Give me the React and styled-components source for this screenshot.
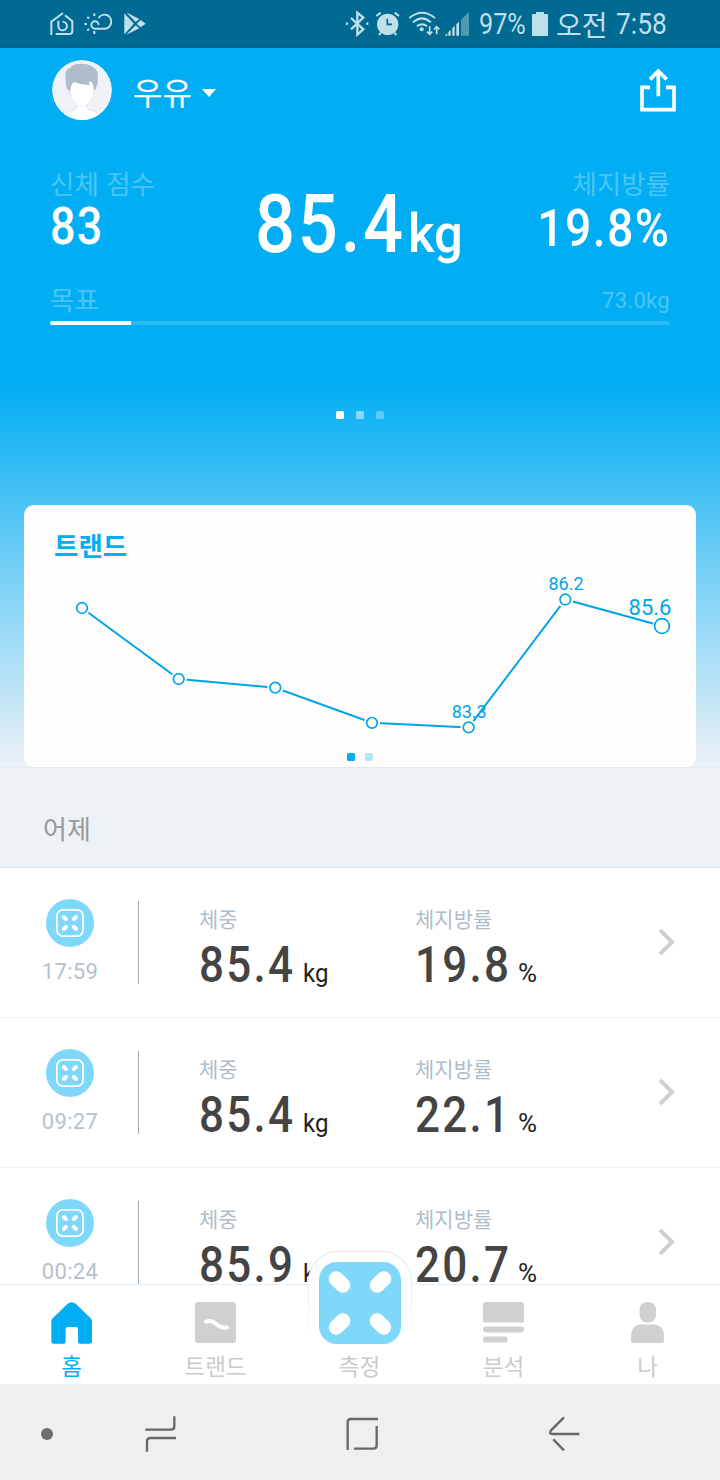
import React from 'react';
import styled, { createGlobalStyle } from 'styled-components';

const GlobalStyle = createGlobalStyle`
  * { box-sizing: border-box; }
  body { margin: 0; background: #fff; }
  svg { display: block; flex: none; }
`;

const BLUE = '#02aef3';
const LINE = '#00a4e8';
const SKY = '#7fd7f9';
const GREY = '#d0d0d0';
const ICON = '#bfdfea';

const Screen = styled.div`
  width: 720px;
  height: 1480px;
  display: flex;
  flex-direction: column;
  overflow: hidden;
  font-family: Roboto, 'Noto Sans CJK KR', sans-serif;
`;

/* ---------- shared text ---------- */

const Slot = styled.div`
  flex: none;
  width: ${(p) => p.$w}px;
  margin-left: ${(p) => p.$ml || 0}px;
  white-space: nowrap;
`;

const Narrow = styled.span`
  display: inline-block;
  white-space: nowrap;
  font-size: ${(p) => p.$size}px;
  line-height: ${(p) => p.$lh || p.$size}px;
  font-weight: ${(p) => p.$weight || 500};
  letter-spacing: ${(p) => p.$ls || 0}px;
  transform: scaleX(${(p) => p.$x || 1});
  transform-origin: ${(p) => p.$origin || 'left'} center;
`;

const Korean = styled.span`
  display: block;
  white-space: nowrap;
  font-family: 'Noto Sans CJK KR', sans-serif;
  font-size: ${(p) => p.$size}px;
  line-height: ${(p) => p.$lh}px;
  font-weight: ${(p) => p.$weight || 400};
  word-spacing: 1.5px;
  color: ${(p) => p.$color || 'inherit'};
`;

/* ---------- status bar ---------- */

const StatusBar = styled.header`
  flex: none;
  height: 48px;
  padding: 1px 0 0 49px;
  display: flex;
  align-items: center;
  background: #006a93;
  color: ${ICON};
  border-bottom: 1px solid #046088;
`;

const Spacer = styled.div`
  flex: none;
  width: ${(p) => p.$w}px;
`;

const Battery = styled.div`
  flex: none;
  width: 17px;
  height: 24px;
  margin-left: 5px;
  display: flex;
  flex-direction: column;
  align-items: center;
  &::before {
    content: '';
    width: 8px;
    height: 2px;
    background: ${ICON};
  }
  &::after {
    content: '';
    width: 16px;
    flex: 1;
    border-radius: 1px;
    background: ${ICON};
  }
`;

const StatusIcons = () => (
  <>
    <svg width="26" height="26" viewBox="147 36 78 78" fill="none" stroke={ICON} strokeWidth="6">
      <path d="M154 108V68L189 42" />
      <path d="M195 49L217 67V97Q217 105 209 105H167" />
      <path d="M175 65V83A13 13 0 1 0 188 68" />
    </svg>
    <Spacer $w={9} />
    <svg width="28" height="26" viewBox="252 36 84 78" fill="none" stroke={ICON} strokeWidth="6">
      <path d="M296 78A11 11 0 1 0 285 89H314A20 21 0 1 0 296 58" />
      <path d="M283 43V51M283 96V105M262 54L267 59M262 95L267 90M253 75H261" />
    </svg>
    <Spacer $w={12} />
    <svg width="22" height="26" viewBox="371 36 66 78" fill={ICON}>
      <path d="M372 43L401 74L372 106Z" />
      <path d="M377 40L417 60L406 69Z" />
      <path d="M421 63L436 74L421 85L409 74Z" />
      <path d="M377 108L406 79L417 88Z" />
    </svg>
    <Spacer $w={199} />
    <svg width="24" height="28" viewBox="46 33 72 84" fill="none" stroke={ICON} strokeWidth="7">
      <path d="M64 57L101 91L83 107V41L101 56L64 91" />
      <path d="M50 70L56 74L50 78ZM115 70L109 74L115 78Z" fill={ICON} strokeWidth="2" />
    </svg>
    <Spacer $w={6} />
    <svg width="26" height="28" viewBox="136 33 78 84">
      <circle cx="174" cy="76" r="32" fill={ICON} />
      <path d="M140 51L153 41M208 51L195 41M148 108L154 101M200 108L194 101" stroke={ICON} strokeWidth="6" />
      <path d="M173 59V76H187" fill="none" stroke="#006a93" strokeWidth="5" />
    </svg>
    <Spacer $w={7} />
    <svg width="34" height="28" viewBox="237 33 102 84" fill="none" stroke={ICON} strokeWidth="6">
      <path d="M241 57Q279 25 318 57M252 70Q279 46 306 70M264 82Q279 69 294 82" />
      <circle cx="278" cy="91" r="6" fill={ICON} stroke="none" />
      <path d="M302 82V105M294 98L302 106L310 98M323 106V84M315 91L323 83L331 91" strokeWidth="5" />
    </svg>
    <Spacer $w={2} />
    <svg width="25" height="28" viewBox="345 33 75 84" fill={ICON}>
      <path d="M396 63L420 38V110H396Z" fill="#4f99b5" />
      <path d="M347 110L355 102V110ZM358 99L365 92V110H358ZM370 87L377 80V110H370ZM382 76L390 68V110H382Z" />
    </svg>
  </>
);

/* ---------- hero ---------- */

const Hero = styled.section`
  flex: none;
  height: 720px;
  display: flex;
  flex-direction: column;
  color: #fff;
  background: linear-gradient(#02aef3 0, #02aef3 337px, #edf2f7 720px);
  border-bottom: 1px solid #e3eaf0;
`;

const ProfileBar = styled.div`
  height: 84px;
  padding: 0 44px 0 52px;
  display: flex;
  align-items: center;
`;

const UserName = styled.div`
  margin: 1px 10px 0 21px;
`;

const Caret = styled.div`
  margin-top: 5px;
  border: 7px solid transparent;
  border-top: 8px solid #fff;
  border-bottom: 0;
`;

const ShareButton = styled.div`
  margin-left: auto;
`;

const Metrics = styled.div`
  height: 148px;
  padding: 32px 50px 0;
  display: grid;
  grid-template-columns: 205px 1fr 140px;
`;

const Metric = styled.div`
  display: flex;
  flex-direction: column;
  align-items: ${(p) => (p.$right ? 'flex-end' : 'flex-start')};
`;

const MainMetric = styled.div`
  display: flex;
  align-items: baseline;
  height: 100px;
  padding-top: 20px;
`;

const faint = 'rgba(255,255,255,.3)';

const Goal = styled.div`
  padding: 0 50px;
  height: 52px;
`;

const GoalHead = styled.div`
  height: 41px;
  display: flex;
  justify-content: space-between;
  align-items: flex-start;
  color: ${faint};
`;

const GoalTarget = styled.div`
  padding-top: 2px;
`;

const Track = styled.div`
  height: 4px;
  border-radius: 2px;
  background: rgba(255,255,255,.16);
`;

const Fill = styled.div`
  width: ${(p) => p.$pct}%;
  height: 4px;
  border-radius: 2px 0 0 2px;
  background: #fff;
`;

const Dots = styled.div`
  display: flex;
  justify-content: center;
  gap: ${(p) => p.$gap}px;
  margin-top: ${(p) => p.$mt}px;
`;

const Dot = styled.i`
  width: 8px;
  height: 8px;
  border-radius: 1.5px;
  background: ${(p) => p.$c};
`;

/* ---------- trend card ---------- */

const Card = styled.div`
  margin: auto 24px 0;
  height: 262px;
  border-radius: 10px;
  background: #fffefd;
  padding-top: 22px;
`;

const CardTitle = styled.div`
  padding-left: 30px;
  height: 38px;
  color: ${BLUE};
`;

const points = [
  { x: 82, y: 608 },
  { x: 178.7, y: 679 },
  { x: 275.3, y: 687.7 },
  { x: 372, y: 722.8 },
  { x: 468.6, y: 727.4, label: '83.3', lx: 469.2, ly: 718, size: 18 },
  { x: 565.3, y: 599.5, label: '86.2', lx: 566, ly: 590, size: 18 },
  { x: 662, y: 626, r: 7.4, label: '85.6', lx: 650, ly: 614.6, size: 22 },
];

const TrendChart = () => (
  <svg width="672" height="188" viewBox="24 565 672 188" fontFamily="Roboto, sans-serif">
    <polyline
      points={points.map((p) => `${p.x},${p.y}`).join(' ')}
      fill="none"
      stroke={LINE}
      strokeWidth="2"
    />
    {points.map((p) => (
      <g key={p.x}>
        <circle cx={p.x} cy={p.y} r={p.r ? 9.5 : 8} fill="#fffefd" />
        <circle cx={p.x} cy={p.y} r={p.r || 5.3} fill="#fffefd" stroke={LINE} strokeWidth="1.7" />
      </g>
    ))}
    {points.filter((p) => p.label).map((p) => (
      <text key={p.label} x={p.lx} y={p.ly} fontSize={p.size} fill={LINE} textAnchor="middle">
        {p.label}
      </text>
    ))}
  </svg>
);

/* ---------- history ---------- */

const DayHeader = styled.div`
  flex: none;
  height: 100px;
  padding: 41px 0 0 43px;
  background: #edf2f7;
  border-bottom: 1px solid #dfe8f0;
`;

const List = styled.div`
  flex: none;
  height: 416px;
  overflow: hidden;
`;

const Row = styled.div`
  height: 150px;
  display: flex;
  border-bottom: 1px solid #edf2f6;
`;

const Source = styled.div`
  width: 138px;
  padding: 31px 0 0 2px;
  display: flex;
  flex-direction: column;
  align-items: center;
  gap: 12px;
  color: #b6c1cb;
`;

const Rule = styled.div`
  width: 1px;
  height: 83px;
  margin-top: 33px;
  background: #9cacb8;
`;

const Reading = styled.div`
  width: ${(p) => p.$w}px;
  padding: 35px 0 0 ${(p) => p.$pl || 0}px;
  color: #444;
`;

const Value = styled.div`
  display: flex;
  align-items: baseline;
  height: 60px;
  margin-top: 2px;
`;

const Unit = styled.span`
  display: inline-block;
  font-size: 25px;
  line-height: 30px;
  font-weight: 400;
  color: #222;
  transform: scaleX(${(p) => p.$x});
  transform-origin: left center;
`;

const Arrow = styled.div`
  margin: 60px 0 0 27px;
`;

const ScaleIcon = () => (
  <svg width="48" height="48" viewBox="0 0 48 48">
    <circle cx="24" cy="24" r="24" fill={SKY} />
    <rect x="10.9" y="10.9" width="26.2" height="26.2" rx="6" fill="none" stroke="#fff" strokeWidth="1.8" />
    <path
      d="M17.8 18L20 20.2M30 18L27.8 20.2M17.8 30L20 27.8M30 30L27.8 27.8"
      stroke="#fff"
      strokeWidth="4"
      strokeLinecap="round"
    />
  </svg>
);

const records = [
  { time: '17:59', weight: '85.4', fat: '19.8' },
  { time: '09:27', weight: '85.4', fat: '22.1' },
  { time: '00:24', weight: '85.9', fat: '20.7' },
];

const Record = ({ time, weight, fat }) => (
  <Row>
    <Source>
      <ScaleIcon />
      <Narrow $size={22} $lh={26} $weight={400} $ls={0.3}>{time}</Narrow>
    </Source>
    <Rule />
    <Reading $w={276} $pl={60}>
      <Korean $size={21} $lh={30} $color="#afbdc8">체중</Korean>
      <Value>
        <Slot $w={104}><Narrow $size={50} $lh={60} $x={0.88} $ls={2.6}>{weight}</Narrow></Slot>
        <Unit $x={0.96}>kg</Unit>
      </Value>
    </Reading>
    <Reading $w={216}>
      <Korean $size={21} $lh={30} $color="#afbdc8">체지방률</Korean>
      <Value>
        <Slot $w={103}><Narrow $size={50} $lh={60} $x={0.88} $ls={2.6}>{fat}</Narrow></Slot>
        <Unit $x={1.04}>%</Unit>
      </Value>
    </Reading>
    <Arrow>
      <svg width="18" height="28" viewBox="0 0 18 28" fill="none" stroke={GREY} strokeWidth="4">
        <path d="M2 2L14 14L2 26" />
      </svg>
    </Arrow>
  </Row>
);

/* ---------- tab bar ---------- */

const TabBar = styled.nav`
  flex: none;
  position: relative;
  height: 100px;
  display: grid;
  grid-template-columns: repeat(5, 144px);
  background: #fff;
  border-top: 1px solid #e2edf7;
`;

const Tab = styled.div`
  padding: 16px 1px 0 0;
  display: flex;
  flex-direction: column;
  align-items: center;
  gap: 5.5px;
  color: ${(p) => (p.$active ? BLUE : '#cbcbcb')};
`;

const MeasureButton = styled.div`
  position: absolute;
  left: 308px;
  top: -34px;
  width: 104px;
  height: 94px;
  padding: 10px;
  border-radius: 30px 30px 0 0;
  background: linear-gradient(#dfeaf5 0, #e6eef7 50%, #fff 90%);
  &::before {
    content: '';
    position: absolute;
    inset: 1px 1px 0;
    border-radius: 29px 29px 0 0;
    background: #fff;
  }
  svg { position: relative; }
`;

const IconBox = styled.div`
  height: 43px;
  display: flex;
  align-items: center;
`;

/* ---------- system navigation ---------- */

const SystemNav = styled.footer`
  flex: none;
  height: 96px;
  display: flex;
  align-items: center;
  padding: 3px 0 0 41px;
  background: #efefef;
`;

const NavDot = styled.div`
  width: 12px;
  height: 12px;
  border-radius: 50%;
  background: #6e6e6e;
`;

export default function App() {
  return (
    <Screen>
      <GlobalStyle />
      <StatusBar>
        <StatusIcons />
        <Slot $w={47} $ml={10}><Narrow $size={30} $lh={34} $weight={400} $x={0.84}>97%</Narrow></Slot>
        <Battery />
        <Slot $w={53} $ml={8}><Korean $size={28} $lh={38}>오전</Korean></Slot>
        <Slot $w={54} $ml={7}><Narrow $size={30} $lh={34} $weight={400} $x={0.88}>7:58</Narrow></Slot>
      </StatusBar>

      <Hero>
        <ProfileBar>
          <svg width="60" height="60" viewBox="156 180 180 180">
            <clipPath id="face"><circle cx="246" cy="270" r="90" /></clipPath>
            <g clipPath="url(#face)">
              <circle cx="246" cy="270" r="90" fill="#eff3f8" />
              <path d="M192 360V344Q204 332 223 330Q233 326 231 314H260Q258 326 269 330Q288 332 300 344V360Z" fill="#fff" />
              <path d="M198 340Q210 331 223 330Q233 326 231 314M261 314Q258 326 269 330Q284 331 295 340" fill="none" stroke="#bcc5d0" strokeWidth="1.5" />
              <path d="M200 254Q193 260 202 274Q205 280 210 279M291 254Q299 260 290 274Q287 280 282 279" fill="#fff" stroke="#bcc5d0" strokeWidth="1.5" />
              <path d="M210 240H282V272Q279 300 258 316Q246 324 234 316Q213 300 210 272Z" fill="#fff" stroke="#c5cdd6" strokeWidth="1" />
              <path d="M201 266Q194 238 197 219Q198 207 210 204Q218 191 242 191Q268 190 279 202Q294 208 294 228Q295 248 288 267L282 272Q281 256 276 248Q273 243 266 246L270 255Q244 256 222 246Q212 254 210 276Z" fill="#b0bccb" />
            </g>
          </svg>
          <UserName><Korean $size={32} $lh={46}>우유</Korean></UserName>
          <Caret />
          <ShareButton>
            <svg width="36" height="44" viewBox="930 203 108 132" fill="none" stroke="#fff" strokeWidth="11">
              <path d="M960 261H936V328H1032V261H1008" />
              <path d="M985 288V212M960 237L985 212L1010 237" />
            </svg>
          </ShareButton>
        </ProfileBar>

        <Metrics>
          <Metric>
            <Korean $size={26.5} $lh={38} $color={faint}>신체 점수</Korean>
            <Narrow $size={51} $lh={50} $x={0.88} $ls={1.5}>83</Narrow>
          </Metric>
          <MainMetric>
            <Slot $w={153}><Narrow $size={81} $lh={82} $x={0.87} $ls={3.2}>85.4</Narrow></Slot>
            <Narrow $size={54} $lh={60} $x={0.94}>kg</Narrow>
          </MainMetric>
          <Metric $right>
            <Korean $size={26.5} $lh={38} $color={faint}>체지방률</Korean>
            <Narrow $size={51} $lh={54} $x={0.91} $ls={1.5} $origin="right">19.8%</Narrow>
          </Metric>
        </Metrics>

        <Goal>
          <GoalHead>
            <Korean $size={26.5} $lh={38}>목표</Korean>
            <GoalTarget><Narrow $size={22} $lh={38} $weight={400} $ls={0.3}>73.0kg</Narrow></GoalTarget>
          </GoalHead>
          <Track><Fill $pct={13.1} /></Track>
        </Goal>

        <Dots $gap={12} $mt={79}>
          <Dot $c="#fff" />
          <Dot $c="rgba(255,255,255,.5)" />
          <Dot $c="rgba(255,255,255,.3)" />
        </Dots>

        <Card>
          <CardTitle><Korean $size={26.5} $lh={36} $weight={700}>트랜드</Korean></CardTitle>
          <TrendChart />
          <Dots $gap={10} $mt={0}>
            <Dot $c={BLUE} />
            <Dot $c="#b1e5fa" />
          </Dots>
        </Card>
      </Hero>

      <DayHeader><Korean $size={26} $lh={38} $color="#999">어제</Korean></DayHeader>
      <List>{records.map((r) => <Record key={r.time} {...r} />)}</List>

      <TabBar>
        <Tab $active>
          <IconBox>
            <svg width="41" height="42" viewBox="153 363 123 126" fill={BLUE}>
              <path d="M154 421Q154 416 158 412L203 368Q215 359 227 368L272 412Q276 416 276 421V482Q276 488 270 488H240Q234 488 234 482V444Q234 438 228 438H203Q197 438 197 444V482Q197 488 191 488H160Q154 488 154 482Z" />
            </svg>
          </IconBox>
          <Korean $size={22.5} $lh={30}>홈</Korean>
        </Tab>
        <Tab>
          <IconBox>
            <svg width="41" height="41" viewBox="0 0 41 41">
              <rect width="41" height="41" rx="3" fill={GREY} />
              <path d="M11 19.6C20 16 22 27.5 32 25.5" fill="none" stroke="#fff" strokeWidth="4" strokeLinecap="round" />
            </svg>
          </IconBox>
          <Korean $size={22.5} $lh={30}>트랜드</Korean>
        </Tab>
        <Tab>
          <IconBox />
          <Korean $size={22.5} $lh={30}>측정</Korean>
        </Tab>
        <Tab>
          <IconBox>
            <svg width="41" height="41" viewBox="0 0 41 41" fill={GREY}>
              <rect width="41" height="20.5" rx="2.5" />
              <rect y="24.5" width="41" height="6" rx="3" />
              <rect y="34.5" width="24.5" height="6" rx="3" />
            </svg>
          </IconBox>
          <Korean $size={22.5} $lh={30}>분석</Korean>
        </Tab>
        <Tab>
          <IconBox>
            <svg width="33" height="41" viewBox="0 0 33 41" fill={GREY}>
              <rect x="8.5" width="16.5" height="20.5" rx="7.5" />
              <path d="M0 35Q0 22.5 11 22.5H22Q33 22.5 33 35V38.5Q33 41 30.5 41H2.5Q0 41 0 38.5Z" />
            </svg>
          </IconBox>
          <Korean $size={22.5} $lh={30}>나</Korean>
        </Tab>
        <MeasureButton>
          <svg width="84" height="84" viewBox="0 0 84 84">
            <rect x="1" y="1" width="82" height="82" rx="18" fill={SKY} />
            <path
              d="M18.2 17.7L24.8 24.3M65.8 17.7L59.2 24.3M18.2 66.3L24.8 59.7M65.8 66.3L59.2 59.7"
              stroke="#fff"
              strokeWidth="15"
              strokeLinecap="round"
            />
          </svg>
        </MeasureButton>
      </TabBar>

      <SystemNav>
        <NavDot />
        <Spacer $w={92} />
        <svg width="32" height="36" viewBox="435 708 96 108" fill="none" stroke="#686868" strokeWidth="7">
          <path d="M436 749H513Q523 749 523 739V709M441 815V784Q441 774 451 774H528" />
        </svg>
        <Spacer $w={168} />
        <svg width="34" height="34" viewBox="1035 711 102 102" fill="none" stroke="#686868" strokeWidth="7">
          <path d="M1043 810V727Q1043 717 1053 717H1134M1062 806H1120Q1130 806 1130 796V738" />
        </svg>
        <Spacer $w={169} />
        <svg width="32" height="36" viewBox="564 708 96 108" fill="none" stroke="#686868" strokeWidth="7">
          <path d="M612 712L573 751Q566 762 577 762H658M580 778L612 811" />
        </svg>
      </SystemNav>
    </Screen>
  );
}
